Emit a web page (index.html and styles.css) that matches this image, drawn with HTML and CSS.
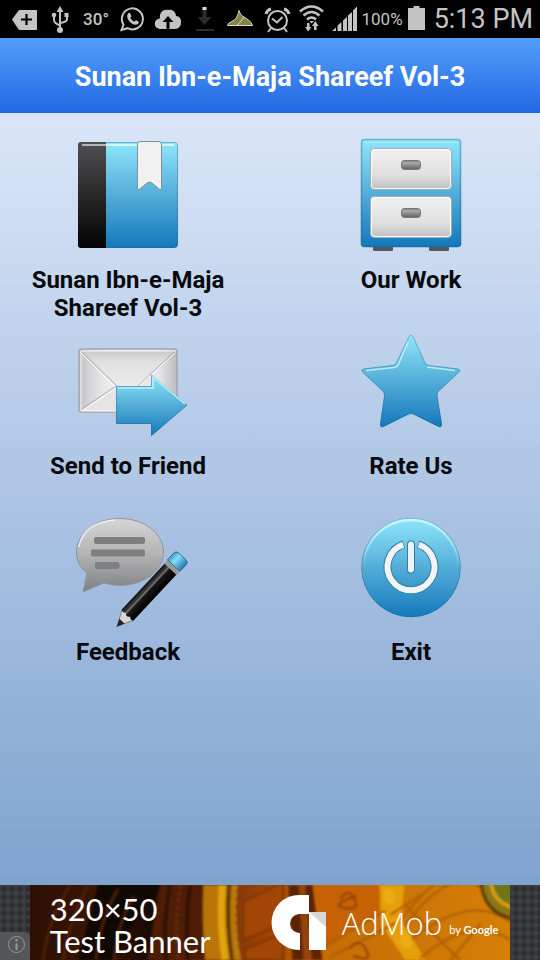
FILE: index.html
```html
<!DOCTYPE html>
<html lang="en">
<head>
<meta charset="utf-8">
<meta name="viewport" content="width=device-width, initial-scale=1">
<title>Sunan Ibn-e-Maja Shareef Vol-3</title>
<link rel="stylesheet" href="styles.css">
</head>
<body>
<div class="status">
  <div class="notes">
    <svg class="slot" viewBox="6 0 36 38"><path fill="#c4c4c4" d="M12 19.500 19 10H37V30H19Z"/><path stroke="#000" stroke-width="2.200" d="M26.500 14v11M21 19.500h11"/></svg>
    <svg class="slot" viewBox="42 0 36 38"><g fill="none" stroke="#c4c4c4" stroke-width="2"><path d="M60 9v20M54 16v4q0 3 6 5.500M67 16v3q0 3-7 4"/></g><path fill="#c4c4c4" d="M60 6l3.500 6h-7zM64.500 13h4v4h-4z"/><circle cx="54" cy="15" r="2.300" fill="#c4c4c4"/><circle cx="60" cy="30" r="3" fill="#c4c4c4"/></svg>
    <span class="slot temp">30°</span>
    <svg class="slot" viewBox="114 0 36 38"><path fill="none" stroke="#c4c4c4" stroke-width="2" d="M121.500 30 123.500 24.500A10.500 10.500 0 1 1 127.500 28.200Z"/><path fill="#c4c4c4" d="M128 13.500c1-1 2-.8 2.400.2l1 2.300c.2.700-1 1.400-1 2 .8 1.700 2 2.800 3.700 3.500.7.100 1.300-1.400 2-1.300l2.300 1.200c.8.500.3 1.800-.5 2.600-3.800 3.500-13.500-5-9.900-10.500z"/></svg>
    <svg class="slot" viewBox="150 0 36 38"><path fill="#c4c4c4" d="M161 29c-8 0-8-10-1-10.500C159 12 164 9 168 10c4-1 8 2 8 6 7 0 7 13-1 13z"/><path fill="#000" d="M168 16l5.500 6h-4v7h-3v-7h-4z"/></svg>
    <svg class="slot" viewBox="186 0 36 38"><path fill="#2c2c2c" d="M202.500 7h4v10h5l-7 8-7-8h5zM196 29h18v2h-18z"/><path fill="#ddd" d="M202.500 7h4v3h-4z"/></svg>
    <svg class="slot" viewBox="222 0 36 38"><path fill="#858246" stroke="#deddc0" stroke-width="1" d="M227.500 25.500c1-4 7-4 9-8 1-2 2-4 2.500-7 1 3 2 5 5 6.500 3 2 7 4 8.500 8.500z"/><path fill="none" stroke="#deddc0" d="M237 25c3-2 5-5 7-8"/></svg>
  </div>
  <div class="system">
    <svg class="alarm" viewBox="264 0 27 38"><g fill="none" stroke="#c4c4c4" stroke-width="2"><circle cx="277.500" cy="20.500" r="9.500"/><path d="M272 18.500l5 4 5.500-5.500M271 28l-3 4M284 28l3 4"/><path stroke-width="3" d="M266 14q1-4 5-5M289 14q-1-4-5-5"/></g></svg>
    <svg class="wifi" viewBox="298 0 27 38"><g fill="none" stroke="#c4c4c4" stroke-width="2.500"><path d="M300 11.500q11.500-10 23 0M303.500 15.500q8-7 16 0M307 19.500q4.500-4 9 0"/></g><path fill="#c4c4c4" d="M309.500 21h4.500l-2.500 2.500zM307 23h2.500v4h2L308.200 31.500 305 27h2zM314 30v-4h-2l3.300-5 3.300 5h-2v4z"/></svg>
    <svg class="signal" viewBox="331 0 26 38"><path fill="#c4c4c4" d="M331 31l4-3.500V31zM336.500 31v-5.500l4-3.500v9zM342 31V20.500l4-3.500v14zM347 31V15.500l4-3.500v19zM352 31V10.500l4-4V31z"/></svg>
    <span class="level">100%</span>
    <svg class="battery" viewBox="408 0 18 38"><path fill="#c4c4c4" d="M408 8h5.500V6h6v2h5.500v22h-17z"/></svg>
    <time class="clock">5:13 PM</time>
  </div>
</div>
<header class="bar"><h1>Sunan Ibn-e-Maja Shareef Vol-3</h1></header>
<svg class="defs" aria-hidden="true">
  <defs>
    <linearGradient id="blue" x1="0" y1="0" x2="0" y2="1"><stop offset="0" stop-color="#8ee6fb"/><stop offset=".5" stop-color="#54add8"/><stop offset="1" stop-color="#1479bb"/></linearGradient>
    <linearGradient id="blueEdge" x1="0" y1="0" x2="0" y2="1"><stop offset="0" stop-color="#66b5c8"/><stop offset="1" stop-color="#1a6fa8"/></linearGradient>
    <linearGradient id="dark" x1="0" y1="0" x2="0" y2="1"><stop offset="0" stop-color="#505052"/><stop offset="1" stop-color="#020202"/></linearGradient>
    <linearGradient id="paper" x1="0" y1="0" x2="0" y2="1"><stop offset="0" stop-color="#f1f1f2"/><stop offset=".65" stop-color="#e0e0e1"/><stop offset="1" stop-color="#bfbfc1"/></linearGradient>
    <linearGradient id="grip" x1="0" y1="0" x2="0" y2="1"><stop offset="0" stop-color="#777"/><stop offset=".25" stop-color="#aaa"/><stop offset="1" stop-color="#5e6062"/></linearGradient>
    <linearGradient id="flap" x1="0" y1="0" x2="0" y2="1"><stop offset="0" stop-color="#c9c9ca"/><stop offset=".3" stop-color="#e0e0e1"/><stop offset="1" stop-color="#ececed"/></linearGradient>
    <linearGradient id="side"><stop offset="0" stop-color="#c4c4c6"/><stop offset=".25" stop-color="#e9e9ea"/><stop offset=".8" stop-color="#e9e9ea"/><stop offset="1" stop-color="#bcbcbe"/></linearGradient>
    <linearGradient id="bubble" x1="0" y1="0" x2="0" y2="1"><stop offset="0" stop-color="#d6d6d7"/><stop offset=".5" stop-color="#b2b2b3"/><stop offset="1" stop-color="#7f8082"/></linearGradient>
    <linearGradient id="barrel"><stop offset="0" stop-color="#111"/><stop offset=".25" stop-color="#3c3c3c"/><stop offset=".35" stop-color="#777"/><stop offset=".45" stop-color="#181818"/><stop offset="1" stop-color="#000"/></linearGradient>
    <linearGradient id="rubber"><stop offset="0" stop-color="#3b9dc9"/><stop offset=".35" stop-color="#86def5"/><stop offset="1" stop-color="#1c7cb1"/></linearGradient>
    <linearGradient id="shine" x1="0" y1="0" x2="0" y2="1"><stop offset="0" stop-color="#c8f6ff"/><stop offset=".5" stop-color="#c8f6ff" stop-opacity="0"/></linearGradient>
  </defs>
</svg>
<main class="menu">
  <button class="item" type="button">
    <svg class="icon" viewBox="68 135 120 120"><rect x="78.500" y="142.500" width="99" height="105" rx="3" fill="url(#blue)" stroke="url(#blueEdge)"/><path fill="url(#dark)" d="M81 142h25v106H81q-3 0-3-3V145q0-3 3-3z"/><path stroke="#fff" stroke-opacity=".6" stroke-width="2" d="M82 145h92"/><path fill="#f1f1f2" stroke="#80939b" d="M137.500 144q0-2.500 2.500-2.500h19q2.500 0 2.500 2.500v44q0 2.500-2 1.200l-7.500-6.200q-2.500-2-5 0l-7.500 6.200q-2 1.300-2-1.200z"/></svg>
    <span class="label">Sunan Ibn-e-Maja Shareef Vol-3</span>
  </button>
  <button class="item" type="button">
    <svg class="icon" viewBox="351 135 120 120"><path fill="#55585c" d="M373 246h20v4q0 1-1 1h-18q-1 0-1-1zM429 246h20v4q0 1-1 1h-18q-1 0-1-1z"/><rect x="361.500" y="139.500" width="99" height="107" rx="3" fill="url(#blue)" stroke="url(#blueEdge)" stroke-width="1.500"/><path stroke="#b5f3fd" stroke-opacity=".6" d="M364 142.500h94"/><g fill="url(#paper)" stroke="#9cadb5" stroke-width="1"><rect x="370.500" y="148.500" width="81" height="41" rx="4"/><rect x="370.500" y="196.500" width="81" height="41" rx="4"/></g><g fill="none" stroke="#fff" stroke-opacity=".9"><rect x="371.500" y="149.500" width="79" height="39" rx="3"/><rect x="371.500" y="197.500" width="79" height="39" rx="3"/></g><g fill="url(#grip)" stroke="#777"><rect x="401.500" y="160.500" width="19" height="9" rx="3"/><rect x="401.500" y="208.500" width="19" height="9" rx="3"/></g></svg>
    <span class="label">Our Work</span>
  </button>
  <button class="item" type="button">
    <svg class="icon" viewBox="68 321 120 120"><rect x="79" y="349" width="98" height="63" rx="3" fill="url(#side)" stroke="#a3a5aa" stroke-width="1.500"/><path fill="#e5e5e6" d="M81 411l35-25h24l35 25z"/><path fill="url(#flap)" d="M81 351h94l-38 34q-9 5-18 0z"/><g fill="none"><path stroke="#a9abae" d="M82 352l35 34M174 352l-36 34M82 409l34-23"/><path stroke="#fff" stroke-opacity=".85" d="M81 411V351h95M81 353l35 35M175 353l-36 33M82 411l35-24M81 411h36"/></g><path fill="url(#blue)" stroke="url(#blueEdge)" d="M116.500 386.500h35v-11.500l35.500 30-35.500 30.500v-12h-35z"/><path fill="none" stroke="#bcf2fc" stroke-width="1.500" d="M118 388h35v-11l32 27"/></svg>
    <span class="label">Send to Friend</span>
  </button>
  <button class="item" type="button">
    <svg class="icon" viewBox="351 321 120 120"><path fill="url(#blue)" stroke="url(#blueEdge)" stroke-linejoin="round" d="M409 336.500q2-3 4 0l11.500 25.500q1 3 4 3.500l29.500 3.500q3 .5 1 3l-20.500 19q-2 2-1.500 5l4.500 28q.3 4-3 2.500l-25-12.500q-2.500-1-5 0l-25 12.500q-3.300 1.500-3-2.500l4-28q.5-3-1.500-5l-20.500-19q-2-2.500 1-3l29.500-3.500q3-.5 4-3.500z"/><path fill="none" stroke="#c5f4fb" stroke-opacity=".85" stroke-width="1.500" d="M408 342l-9 21q-1.500 4-5 4.500l-28 3M427 367l28 3.500"/></svg>
    <span class="label">Rate Us</span>
  </button>
  <button class="item" type="button">
    <svg class="icon" viewBox="68 507 120 120"><path fill="url(#bubble)" stroke="#8f969e" d="M120 518.500c24 0 43.500 15 43.500 33.500s-19.500 33.500-43.500 33.500q-8 0-16-2.500l-21 9 4-19c-7-5-10.500-12-10.500-21 0-18.500 19.500-33.500 43.500-33.500z"/><path fill="none" stroke="#fff" stroke-opacity=".7" stroke-width="1.500" d="M79 547q4-24 36-27"/><path fill="#7d7f81" d="M96 537h47q2 0 2 2v3q0 2-2 2H96q-2 0-2-2v-3q0-2 2-2zM93 549.500h50q2 0 2 2v3q0 2-2 2H93q-2 0-2-2v-3q0-2 2-2zM97 562h20q2.500 0 2.500 2v3q0 2-2.500 2H97q-2 0-2-2v-3q0-2 2-2z"/><g transform="translate(116.500 627) rotate(43)"><path fill="#d6d6d8" stroke="#777" stroke-width=".8" d="M-1.500-4L-8-17H8L1.500-4z"/><path fill="#222" d="M0 0l-3.500-8h7z"/><path fill="url(#barrel)" d="M-8-16V-80H8v64q-3 2-5-1-3 4-6 0-2 3-5 1z"/><path fill="#96989a" d="M-8.500-84h17v5h-17z"/><path fill="url(#rubber)" stroke="#25658a" stroke-width=".8" d="M-8.500-84v-9q0-3.500 3.500-3.500h10q3.500 0 3.500 3.500v9z"/></g></svg>
    <span class="label">Feedback</span>
  </button>
  <button class="item" type="button">
    <svg class="icon" viewBox="351 507 120 120"><circle cx="411" cy="567.500" r="49.300" fill="url(#blue)" stroke="url(#blueEdge)"/><circle cx="411" cy="567.500" r="47.500" fill="none" stroke="url(#shine)" stroke-width="2.500"/><g fill="none"><path stroke="#3181a2" stroke-width="8" d="M403.700 544.200a23.500 23.500 0 1 0 14.600 0"/><path stroke="#f2f3f5" stroke-width="6" d="M403.200 544.700a23.500 23.500 0 1 0 15.600 0"/><path stroke="#3181a2" stroke-width="8" stroke-linecap="round" d="M411 544.500v25"/><path stroke="#f2f3f5" stroke-width="6" stroke-linecap="round" d="M411 544.500v25"/></g></svg>
    <span class="label">Exit</span>
  </button>
</main>
<footer class="ad">
  <svg class="info" viewBox="0 0 30 28"><path fill="#555659" d="M0 0h24q6 0 6 6v22H0z"/><circle cx="16.500" cy="12.500" r="8" fill="none" stroke="#999"/><path stroke="#999" stroke-width="2" d="M16.500 7v2.500M16.500 11.500v6.500"/></svg>
  <a class="banner" href="#">
    <svg class="art" viewBox="30 885 480 75" preserveAspectRatio="xMidYMid slice" aria-hidden="true">
      <defs><linearGradient id="dome"><stop offset="0" stop-color="#2d1003"/><stop offset=".14" stop-color="#3b1504"/><stop offset=".25" stop-color="#180a03"/><stop offset=".32" stop-color="#602706"/><stop offset=".42" stop-color="#82380a"/><stop offset=".5" stop-color="#a34403"/><stop offset=".6" stop-color="#c56c04"/><stop offset="1" stop-color="#d57f06"/></linearGradient></defs>
      <path fill="url(#dome)" d="M30 885h480v75H30z"/>
      <g class="soft">
      <path fill="#100803" d="M98 885h66l-28 35-22 40H78z"/>
      <g fill="none" stroke="#4f1f06" stroke-width="3"><path d="M70 885q-22 35-27 75M88 885q-20 38-25 75M118 889q-18 30-22 71M134 896q-18 30-20 64"/></g>
      <path fill="#4f1d05" d="M160 885h44v75h-57z"/>
      <g fill="none" stroke="#2c1003" stroke-width="3"><path d="M170 885q-8 40-4 75M190 885q-6 40-2 75"/><path stroke-dasharray="4 3" stroke="#6b2b0a" d="M180 885q-6 40-2 75"/></g>
      <path fill="#b97508" d="M203 885h34q-4 40 4 75h-36q-4-40-2-75z"/>
      <path fill="none" stroke="#e0a50b" stroke-width="7" d="M222 885q-3 40 3 75"/>
      <path fill="none" stroke="#553205" stroke-width="3" d="M229 885q-3 40 3 75"/>
      <path fill="none" stroke="#b8801f" stroke-width="3" stroke-dasharray="4 4" d="M236 885q-3 40 3 75"/>
      <g fill="#a34504" stroke="#7e3704" stroke-width="2"><path d="M243 902l40-20v42l-40 16zM245 949l38-16v27h-38z"/></g>
      <path fill="#5c2405" d="M288 885h24l10 75h-30z"/><path fill="#94430a" d="M298 885h7l7 75h-9z"/>
      <path fill="#c66204" d="M314 885h67l-4 29-53 36z"/>
      <path fill="#e79e0b" d="M379 885h25l-3 35 24 40h-20l-24-35z"/>
      <g fill="none" stroke="#aa5f05" stroke-width="2"><path d="M404 926q45-60 75-39M402 918q42-54 56-33M410 940q60-48 100-18M420 958q50-43 90-18M325 945l60-34M330 957l65-34M404 904l55 56M420 895l-30 20M450 960l30-36"/><path stroke="#93410a" d="M340 899q8-12 14 0t-10 9 12-12M350 948q9-11 16 2t-13 6"/></g>
      <path fill="#8c7514" stroke="#5d3b06" stroke-width="3" d="M480 880q3 35 35 39v-39z"/><path fill="#70751b" stroke="#d89c16" stroke-width="4" d="M490 880q2 24 25 28v-28z"/>
      <path fill="#eaad14" d="M385 888q16 4 7 17-14-2-7-17zM403 930q14 8 6 20-15-5-6-20z"/>
      </g>
    </svg>
    <span class="size"><span>320×50</span><span>Test Banner</span></span>
    <svg class="logo" viewBox="271 893 57 57"><path fill="#fff" d="M309 894h-10a27.500 27.500 0 0 0 0 55h1v-17a9.500 9.500 0 0 1-1-19h10z"/><path fill="#fff" d="M309 911h17v38h-17z"/><path fill="#d9d6d5" d="M309 911h17v15z"/></svg>
    <span class="brand">AdMob</span>
    <span class="by">by <b>Google</b></span>
  </a>
</footer>
</body>
</html>
```
FILE: styles.css
```css
* { box-sizing: border-box; }

body {
  margin: 0;
  min-height: 100vh;
  display: flex;
  flex-direction: column;
  font-family: Roboto, "Liberation Sans", sans-serif;
  background: #7fa3cf;
}

.status {
  display: flex;
  align-items: center;
  justify-content: space-between;
  height: 38px;
  padding: 0 7px 0 6px;
  background: #000;
  color: #c4c4c4;
}

.notes, .system { display: flex; align-items: center; }
.slot { width: 36px; height: 38px; flex: none; }
.temp {
  font-size: 17px;
  font-weight: 500;
  line-height: 38px;
  text-align: center;
}
.alarm, .wifi { width: 27px; height: 38px; margin-right: 7px; }
.signal { width: 26px; height: 38px; margin-right: 4px; }
.level { font-size: 17px; line-height: 38px; }
.battery { width: 18px; height: 38px; margin: 0 8px 0 5px; }
.clock { font-size: 27px; line-height: 38px; white-space: nowrap; }

.bar {
  display: flex;
  align-items: center;
  justify-content: center;
  height: 75px;
  padding-top: 2px;
  background: linear-gradient(#549efa, #2168e3);
}
.bar h1 {
  margin: 0;
  color: #fff;
  font-size: 27px;
  font-weight: 700;
  line-height: 32px;
}

.defs { position: absolute; width: 0; height: 0; }

.menu {
  flex: 1;
  display: grid;
  grid-template-columns: 1fr 1fr;
  grid-auto-rows: 186px;
  align-content: start;
  column-gap: 67px;
  padding: 22px 21px 0 20px;
  background: linear-gradient(#dae6f8, #7fa3cf);
}
.item {
  display: flex;
  flex-direction: column;
  align-items: center;
  gap: 11px;
  padding: 0;
  border: 0;
  background: none;
  color: #080a0d;
  font: inherit;
}
.icon { width: 120px; height: 120px; flex: none; overflow: visible; }
.label {
  min-height: 55px;
  font-size: 24px;
  font-weight: 700;
  line-height: 28px;
}

.ad {
  position: relative;
  display: flex;
  justify-content: center;
  height: 75px;
  background: radial-gradient(circle, #2c2d30 2px, #3d3e41 4px) 0 0 / 8px 8px;
}
.info { position: absolute; left: 0; bottom: 0; width: 30px; height: 28px; }
.banner {
  position: relative;
  display: flex;
  align-items: center;
  width: 89%;
  padding-left: 20px;
  overflow: hidden;
  color: #fff;
  text-decoration: none;
}
.art { position: absolute; inset: 0; width: 100%; height: 100%; }
.soft { filter: blur(1px); }
.size, .logo, .brand, .by { position: relative; white-space: nowrap; }
.size {
  display: flex;
  flex-direction: column;
  width: 221px;
  padding-top: 4px;
  font: 400 31px/32px Lato, sans-serif;
}
.logo { width: 57px; height: 57px; flex: none; }
.brand { margin-left: 14px; font: 300 31px/40px "Open Sans", sans-serif; }
.by { margin: 14px 0 0 7px; font: 400 11px/16px Lato, sans-serif; }
```
